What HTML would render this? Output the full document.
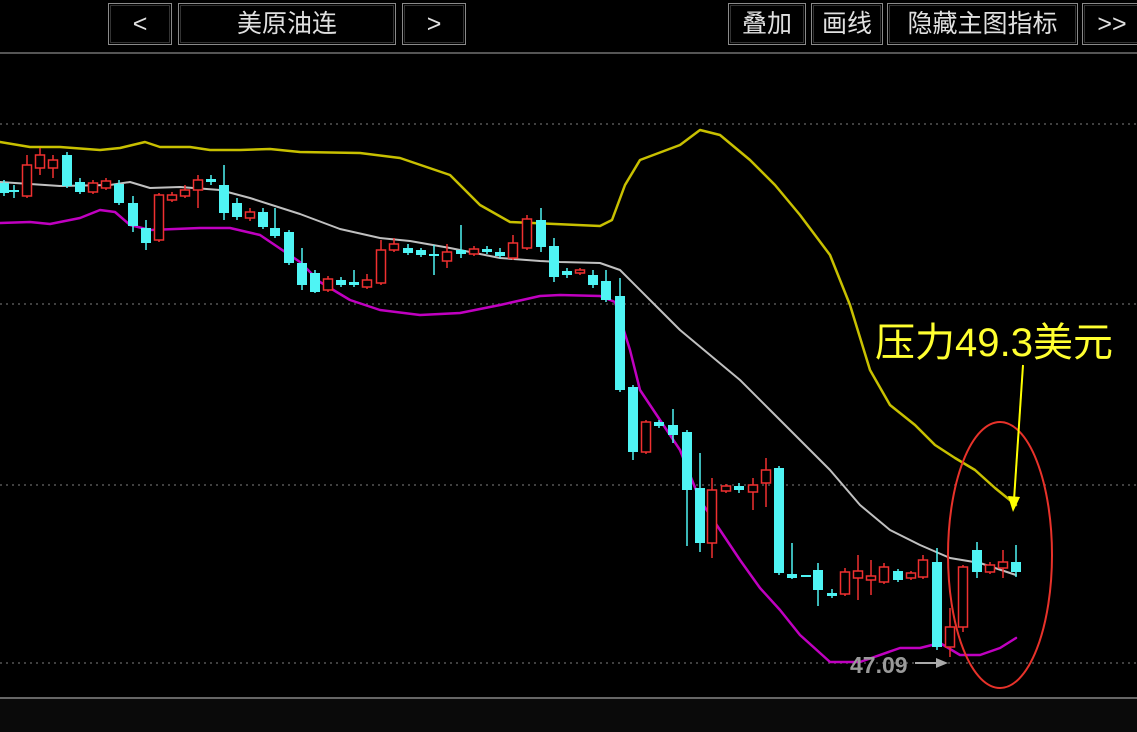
<!DOCTYPE html>
<html><head><meta charset="utf-8"><style>
body{margin:0;background:#000;width:1137px;height:732px;overflow:hidden;position:relative;font-family:"Liberation Sans","Noto Sans CJK SC",sans-serif}
.b{position:absolute;top:3px;border:1px solid #8a8a8a;color:#e0e0e0;font-size:25px;line-height:40px;text-align:center;box-sizing:border-box;height:42px;outline:1px solid #333;outline-offset:-3px}
</style></head><body>
<div class="b" style="left:108px;width:64px">&lt;</div>
<div class="b" style="left:178px;width:218px">美原油连</div>
<div class="b" style="left:402px;width:64px">&gt;</div>
<div class="b" style="left:728px;width:78px">叠加</div>
<div class="b" style="left:811px;width:72px">画线</div>
<div class="b" style="left:887px;width:191px">隐藏主图指标</div>
<div class="b" style="left:1082px;width:60px">&gt;&gt;</div>
<svg id="s" width="1137" height="732" style="position:absolute;left:0;top:0" xmlns="http://www.w3.org/2000/svg">
<line x1="0" y1="53" x2="1137" y2="53" stroke="#555" stroke-width="2"/>
<g stroke="#555" stroke-width="1.5" stroke-dasharray="2,4">
<line x1="0" y1="124" x2="1137" y2="124"/><line x1="0" y1="304" x2="1137" y2="304"/>
<line x1="0" y1="485" x2="1137" y2="485"/><line x1="0" y1="663" x2="1137" y2="663"/></g>
<line x1="0" y1="698" x2="1137" y2="698" stroke="#666" stroke-width="2"/>
<rect x="0" y="699" width="1137" height="33" fill="#0a0a0a"/>
<g fill="none" stroke-linejoin="round" stroke-linecap="round">
<polyline stroke="#c8c000" stroke-width="2.5" points="0,142 30,147 60,147 100,150 120,148 145,142 160,147 190,147 210,150 240,150 270,149 300,152 360,153 400,158 450,175 480,205 510,222 600,226 612,220 625,185 640,160 680,145 700,130 720,135 750,160 775,185 800,215 830,255 850,305 870,370 890,405 915,425 935,445 955,458 975,470 995,488 1016,505"/>
<polyline stroke="#c0c0c0" stroke-width="2" points="0,182 60,186 110,185 130,182 150,188 180,187 220,190 250,198 300,214 340,229 380,238 410,241 450,248 500,258 540,261 560,262 600,263 620,270 650,300 680,330 710,355 740,380 770,410 800,440 830,470 860,505 890,530 920,545 950,558 980,563 1016,575"/>
<polyline stroke="#c000c0" stroke-width="2.5" points="0,223 30,222 50,224 80,218 100,210 115,212 130,225 150,230 200,228 230,228 260,235 300,262 320,282 350,300 380,310 420,315 460,313 500,305 540,296 560,295 600,296 615,302 630,350 640,390 660,420 680,450 700,500 720,530 740,560 760,588 780,610 800,635 830,662 860,662 900,648 920,648 940,643 960,655 980,655 1000,648 1016,638"/>
</g>
<g id="c"></g>
<ellipse cx="1000" cy="555" rx="52" ry="133" fill="none" stroke="#e8322a" stroke-width="2"/>
<line x1="1023" y1="365" x2="1014" y2="500" stroke="#ffff00" stroke-width="2"/>
<polygon points="1008,496 1020,497 1013,512" fill="#ffff00"/>
<text x="875" y="356" fill="#ffff30" font-size="40" font-family="Liberation Sans,Noto Sans CJK SC,sans-serif" textLength="238">压力49.3美元</text>
<text x="850" y="673" fill="#9a9a9a" font-size="23" font-weight="bold" font-family="Liberation Sans,sans-serif">47.09</text>
<line x1="915" y1="663" x2="940" y2="663" stroke="#aaa" stroke-width="2"/>
<polygon points="936,658 948,663 936,668" fill="#aaa"/>
</svg>
<script>
var d=[[4,'c',183,193,180,196],[14,'c',190,192,185,198],[27,'r',165,196,155,198],[40,'r',155,168,148,175],[53,'r',160,168,155,178],[67,'c',155,186,152,188],[80,'c',182,192,178,194],[93,'r',183,192,180,194],[106,'r',181,188,178,190],[119,'c',184,203,180,205],[133,'c',203,226,196,232],[146,'c',228,243,220,250],[159,'r',195,240,193,242],[172,'r',195,200,192,202],[185,'r',190,196,185,198],[198,'r',180,190,175,208],[211,'c',179,182,175,185],[224,'c',185,213,165,220],[237,'c',203,217,198,220],[250,'r',212,218,208,221],[263,'c',212,227,208,229],[275,'c',228,236,208,238],[289,'c',232,263,230,265],[302,'c',263,285,248,290],[315,'c',273,292,270,293],[328,'r',279,290,276,292],[341,'c',280,285,277,287],[354,'c',282,285,270,287],[367,'r',280,287,274,289],[381,'r',250,283,240,285],[394,'r',244,250,238,252],[408,'c',248,253,244,255],[421,'c',250,255,248,257],[434,'c',254,256,245,275],[447,'r',252,261,244,268],[461,'c',250,254,225,258],[474,'r',249,254,246,256],[487,'c',249,252,246,254],[500,'c',252,256,248,258],[513,'r',243,258,235,260],[527,'r',219,248,215,250],[541,'c',220,247,208,252],[554,'c',246,277,238,282],[567,'c',271,275,268,278],[580,'r',270,273,268,275],[593,'c',275,285,270,288],[606,'c',281,300,270,302],[620,'c',296,390,278,392],[633,'c',387,452,385,460],[646,'r',422,452,420,454],[659,'c',422,426,420,428],[673,'c',425,435,409,443],[687,'c',432,490,430,546],[700,'c',488,543,453,552],[712,'r',490,543,478,558],[726,'r',486,491,484,493],[739,'c',486,490,483,493],[753,'r',485,492,478,510],[766,'r',470,483,458,507],[779,'c',468,573,466,575],[792,'c',574,578,543,579],[806,'c',575,577,575,577],[818,'c',570,590,563,606],[832,'c',593,596,589,598],[845,'r',572,594,568,596],[858,'r',571,578,555,600],[871,'r',576,580,560,595],[884,'r',567,582,563,584],[898,'c',571,580,569,582],[911,'r',573,578,571,580],[923,'r',560,577,555,579],[937,'c',562,647,548,650],[950,'r',627,647,608,657],[963,'r',567,627,565,632],[977,'c',550,572,542,578],[990,'r',565,572,562,574],[1003,'r',562,568,550,578],[1016,'c',562,572,545,577]];
var g=document.getElementById('c'),h='';
d.forEach(function(a){var x=a[0],cy=a[1]=='c',col=cy?'#4ff4f4':'#f03030';
h+='<line x1="'+x+'" y1="'+a[4]+'" x2="'+x+'" y2="'+a[5]+'" stroke="'+col+'" stroke-width="1.5"/>';
var hgt=Math.max(a[3]-a[2],2);
if(cy)h+='<rect x="'+(x-5)+'" y="'+a[2]+'" width="10" height="'+hgt+'" fill="'+col+'"/>';
else h+='<rect x="'+(x-4.5)+'" y="'+a[2]+'" width="9" height="'+hgt+'" fill="#000" stroke="'+col+'" stroke-width="1.5"/>';});
g.innerHTML=h;
</script>
</body></html>
